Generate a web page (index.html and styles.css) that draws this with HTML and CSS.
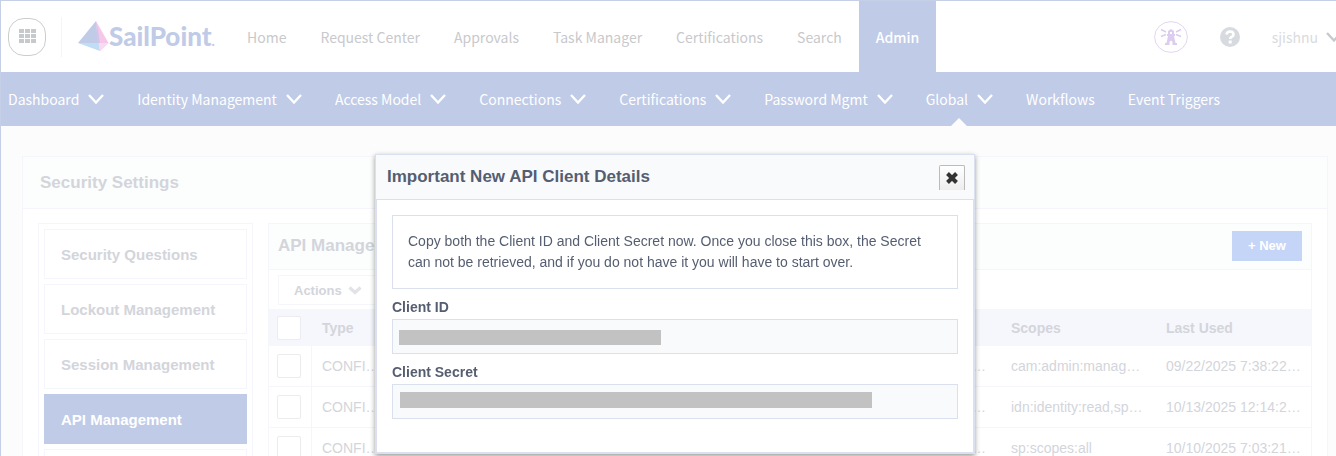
FILE: index.html
```html
<!DOCTYPE html>
<html lang="en">
<head>
<meta charset="utf-8">
<title>Security Settings</title>
<link rel="stylesheet" href="styles.css">
</head>
<body>
<svg class="defs" aria-hidden="true">
  <symbol id="chevron" viewBox="0 0 16 10"><path d="M1 1 L8 8.500 L15 1" fill="none" stroke="currentColor" stroke-width="2.400"/></symbol>
</svg>
<div class="page">
  <header class="topbar">
    <button class="apps" aria-label="Applications">
      <svg width="17" height="15" viewBox="0 0 17 15" fill="currentColor"><path d="M0 0h5v4H0zM6 0h5v4H6zM12 0h5v4h-5zM0 5h5v4H0zM6 5h5v4H6zM12 5h5v4h-5zM0 10h5v4H0zM6 10h5v4H6zM12 10h5v4h-5z"/></svg>
    </button>
    <a class="logo" href="#">
      <svg width="31" height="31" viewBox="0 0 31 31">
        <path d="M18 0 L0 22 L20 22.500Z" fill="#bfcbe7"/>
        <path d="M18 0 L30.500 22 L22 30 L19.500 15Z" fill="#f5c8e9"/>
        <path d="M0 22 H21 L22 30Z" fill="#bfddf5"/>
        <path d="M20.500 22 H30.500 L22 30Z" fill="#f7dcf1"/>
        <path d="M18 0 L20 8 L22 22 H19Z" fill="#d3c5ea"/>
      </svg>
      <span class="wordmark">SailPoint<span class="mark">.</span></span>
    </a>
    <nav class="mainnav">
      <a href="#">Home</a><a href="#">Request Center</a><a href="#">Approvals</a><a href="#">Task Manager</a><a href="#">Certifications</a><a href="#">Search</a><a class="active" href="#">Admin</a>
    </nav>
    <div class="tools">
      <button class="beacon" aria-label="Guide">
        <svg width="34" height="32" viewBox="0 0 34 32">
          <ellipse cx="17" cy="16" rx="16.400" ry="15.400" fill="#fff" stroke="#e2d6f1"/>
          <path d="M14 10 L17 8 L20 10 V13 H21 V15 H20 L21.500 22 H23 V24 H18.500 V21 Q17 18.500 15.500 21 V24 H11 V22 H12.500 L14 15 H13 V13 H14Z" fill="#dccdf0"/>
          <path d="M16 11h2v2h-2z" fill="#fff"/>
          <path d="M7 8.500 L12 11 M7 15.500 L12 13.500 M27 8.500 L22 11 M27 15.500 L22 13.500" stroke="#dccdf0" stroke-width="1.600"/>
        </svg>
      </button>
      <button class="help" aria-label="Help">
        <svg width="20" height="20" viewBox="0 0 20 20"><circle cx="10" cy="10" r="10" fill="#d7dade"/><path d="M6.500 7.500 Q7 4.500 10.200 4.500 Q13.500 4.700 13.500 7.400 Q13.500 9 11.500 9.900 Q10.200 10.600 10.200 12" fill="none" stroke="#fff" stroke-width="2.600"/><path d="M8.700 13.500h3v3h-3z" fill="#fff"/></svg>
      </button>
      <button class="user">sjishnu <svg class="chev"><use href="#chevron"/></svg></button>
    </div>
  </header>
  <nav class="subnav">
    <a href="#">Dashboard <svg class="chev"><use href="#chevron"/></svg></a>
    <a href="#">Identity Management <svg class="chev"><use href="#chevron"/></svg></a>
    <a href="#">Access Model <svg class="chev"><use href="#chevron"/></svg></a>
    <a href="#">Connections <svg class="chev"><use href="#chevron"/></svg></a>
    <a href="#">Certifications <svg class="chev"><use href="#chevron"/></svg></a>
    <a href="#">Password Mgmt <svg class="chev"><use href="#chevron"/></svg></a>
    <a class="current" href="#">Global <svg class="chev"><use href="#chevron"/></svg></a>
    <a href="#">Workflows</a>
    <a href="#">Event Triggers</a>
  </nav>
  <main class="card">
    <h1 class="card-title">Security Settings</h1>
    <div class="card-body">
      <nav class="side">
        <a href="#">Security Questions</a>
        <a href="#">Lockout Management</a>
        <a href="#">Session Management</a>
        <a class="active" href="#">API Management</a>
        <a href="#" aria-label="More"></a>
      </nav>
      <section class="panel">
        <div class="panel-head"><h2>API Management</h2><button class="new">+ New</button></div>
        <div class="toolbar"><button class="actions">Actions
          <svg width="14" height="9" viewBox="0 0 14 9"><path d="M1.500 1.500 L7 6.500 L12.500 1.500" fill="none" stroke="#e2e3e6" stroke-width="3.200"/></svg></button></div>
        <table class="clients">
          <colgroup><col class="c-check"><col class="c-type"><col><col class="c-scope"><col class="c-used"></colgroup>
          <thead><tr><th><input type="checkbox" aria-label="Select all"></th><th>Type</th><th></th><th>Scopes</th><th>Last Used</th></tr></thead>
          <tbody>
            <tr><td><input type="checkbox" aria-label="Select row 1"></td><td>CONFI…</td><td class="cut">…</td><td>cam:admin:manag…</td><td>09/22/2025 7:38:22…</td></tr>
            <tr><td><input type="checkbox" aria-label="Select row 2"></td><td>CONFI…</td><td class="cut">…</td><td>idn:identity:read,sp…</td><td>10/13/2025 12:14:2…</td></tr>
            <tr><td><input type="checkbox" aria-label="Select row 3"></td><td>CONFI…</td><td class="cut">…</td><td>sp:scopes:all</td><td>10/10/2025 7:03:21…</td></tr>
          </tbody>
        </table>
      </section>
    </div>
  </main>
</div>
<div class="overlay">
  <div class="dialog" role="dialog" aria-labelledby="dialog-title">
    <div class="dialog-head">
      <h2 id="dialog-title">Important New API Client Details</h2>
      <button class="close" aria-label="Close"><svg width="14" height="14" viewBox="0 0 14 14"><path d="M2.500 2.500 L11.500 11.500 M11.500 2.500 L2.500 11.500" stroke="#333" stroke-width="4"/></svg></button>
    </div>
    <div class="dialog-body">
      <p class="notice">Copy both the Client ID and Client Secret now. Once you close this box, the Secret can not be retrieved, and if you do not have it you will have to start over.</p>
      <label for="client-id">Client ID</label>
      <div class="field"><input id="client-id" type="text" readonly><span class="mask mask-id"></span></div>
      <label for="client-secret">Client Secret</label>
      <div class="field"><input id="client-secret" type="text" readonly><span class="mask mask-secret"></span></div>
    </div>
  </div>
</div>
</body>
</html>
```
FILE: styles.css
```css
* { box-sizing: border-box; }
body {
  margin: 0;
  font-family: "Liberation Sans", Arial, sans-serif;
  font-size: 14px;
  color: #d3d5db;
  background: #fcfcfc;
}
a { color: inherit; text-decoration: none; }
button { font: inherit; color: inherit; background: none; border: 0; padding: 0; }
h1, h2, p { margin: 0; }
svg { display: block; flex: none; }
.defs { position: absolute; width: 0; height: 0; }
.page {
  height: 100vh;
  overflow: hidden;
  border: solid #c5cfe6;
  border-width: 1px 0 0 1px;
}
.chev { width: 16px; height: 10px; }

.topbar {
  display: flex;
  align-items: center;
  height: 71px;
  padding-left: 7px;
  background: #fff;
  font-family: "Noto Sans CJK SC", "Open Sans", sans-serif;
  font-size: 14px;
  color: #c8c9cc;
  overflow: hidden;
}
.apps {
  display: grid;
  place-items: center;
  flex: none;
  width: 38px;
  height: 38px;
  border: 1px solid #cdcdcd;
  border-radius: 16px;
  color: #c7cacd;
}
.logo {
  display: flex;
  align-items: center;
  flex: none;
  width: 169px;
  height: 40px;
  margin-left: 15px;
  padding-left: 16px;
  border-left: 1px solid #f5f5f5;
}
.wordmark { font: 900 26px/30px Lato, sans-serif; color: #bfcbe7; padding-top: 3px; }
.mark { font-size: 14px; }
.mainnav { display: flex; align-self: stretch; }
.mainnav a { display: flex; align-items: center; padding: 0 17px; white-space: nowrap; }
.mainnav .active { background: #bfcbe7; color: #fff; font-weight: 500; }
.tools { display: flex; align-items: center; gap: 32px; margin-left: auto; margin-right: -6px; }
.user { display: flex; align-items: center; gap: 8px; color: #d9dbde; }
.user .chev { color: #c7cacd; }

.subnav {
  display: flex;
  height: 54px;
  background: #bfcbe7;
  color: #fff;
  font-family: "Noto Sans CJK SC", "Open Sans", sans-serif;
  font-size: 14px;
  padding-left: 7px;
  gap: 33px;
}
.subnav a { position: relative; display: flex; align-items: center; gap: 9px; white-space: nowrap; }
.subnav .current::after {
  content: "";
  position: absolute;
  bottom: 0;
  left: 50%;
  margin-left: -8px;
  border: 8px solid transparent;
  border-top: 0;
  border-bottom-color: #fcfcfc;
}

.card { margin: 30px 8px 0 21px; border: 1px solid #f5f6fc; background: #fff; }
.card-title {
  padding: 0 17px;
  font-size: 17px;
  line-height: 51px;
  background: #fcfefe;
  border-bottom: 1px solid #f5f6fc;
}
.card-body { display: flex; align-items: flex-start; gap: 15px; padding: 14px 15px; }
.side {
  display: flex;
  flex-direction: column;
  gap: 5px;
  flex: none;
  width: 215px;
  padding: 5px;
  border: 1px solid #f5f6fc;
}
.side a {
  height: 50px;
  padding: 0 16px;
  border: 1px solid #f5f6fc;
  font-size: 15px;
  font-weight: bold;
  line-height: 50px;
}
.side .active { background: #bfcbe7; border-color: #bfcbe7; color: #fff; }

.panel { flex: 1; min-width: 0; border: 1px solid #f5f6fc; }
.panel-head {
  display: flex;
  align-items: center;
  justify-content: space-between;
  height: 46px;
  padding: 0 9px 2px;
  background: #fcfefe;
  border-bottom: 1px solid #f5f6fc;
}
.panel-head h2 { font-size: 17px; }
.new { width: 70px; height: 30px; background: #c5d5f7; color: #fff; font-size: 13px; font-weight: bold; }
.toolbar { padding: 5px 9px 4px; }
.actions {
  display: flex;
  align-items: center;
  gap: 6px;
  height: 30px;
  padding: 0 15px;
  border: 1px solid #f5f6fc;
  font-size: 13px;
  font-weight: bold;
}
.clients { width: 100%; table-layout: fixed; border-collapse: separate; border-spacing: 0; }
.c-check { width: 43px; }
.c-type { width: 82px; }
.c-scope { width: 155px; }
.c-used { width: 155px; }
.clients th, .clients td { height: 41px; padding: 0 10px; text-align: left; white-space: nowrap; }
.clients th { height: 37px; background: #f6f7fc; }
.clients td { border-bottom: 1px solid #f5f6fc; }
.clients td:first-child { border-right: 1px solid #f5f6fc; }
.clients th:first-child, .clients td:first-child { padding: 0 8px; }
.clients .cut { text-align: right; padding-right: 15px; }
.clients input {
  appearance: none;
  display: block;
  width: 24px;
  height: 24px;
  margin: 0;
  border: 1px solid #ececee;
  border-radius: 2px;
  background: #fff;
}

.overlay {
  position: fixed;
  inset: 0;
  display: flex;
  justify-content: center;
  align-items: flex-start;
  padding: 154px 0 0 14px;
}
.dialog {
  width: 600px;
  background: #fff;
  color: #555e71;
  border: 1px solid #dae0ee;
  box-shadow: 0 2px 5px rgba(0, 0, 0, 0.4);
}
.dialog-head {
  display: flex;
  justify-content: space-between;
  align-items: center;
  height: 45px;
  padding: 0 9px 0 11px;
  background: #f9fafc;
  border-bottom: 1px solid #dae0ee;
}
.dialog-head h2 { font-size: 17px; }
.close {
  display: grid;
  place-items: center;
  width: 26px;
  height: 25px;
  border: 1px solid #bbb;
  border-bottom: 0;
  border-radius: 2px 2px 0 0;
  background: linear-gradient(#fff, #ededed);
}
.dialog-body { padding: 15px 15px 33px; border: solid #dae0ee; border-width: 0 1px 1px; }
.notice { padding: 15px; border: 1px solid #dae0ee; line-height: 21px; margin-bottom: 8px; }
.dialog-body label { display: block; font-weight: bold; line-height: 20px; padding-bottom: 2px; }
.field { position: relative; margin-bottom: 8px; }
.field input {
  display: block;
  width: 100%;
  height: 35px;
  padding: 0 8px;
  border: 1px solid #dae0ee;
  background: #f9fafc;
}
.field:last-child { margin-bottom: 0; }
.mask { position: absolute; background: #c2c2c2; }
.mask-id { left: 7px; top: 11px; width: 262px; height: 15px; }
.mask-secret { left: 8px; top: 8px; width: 472px; height: 16px; }
```
